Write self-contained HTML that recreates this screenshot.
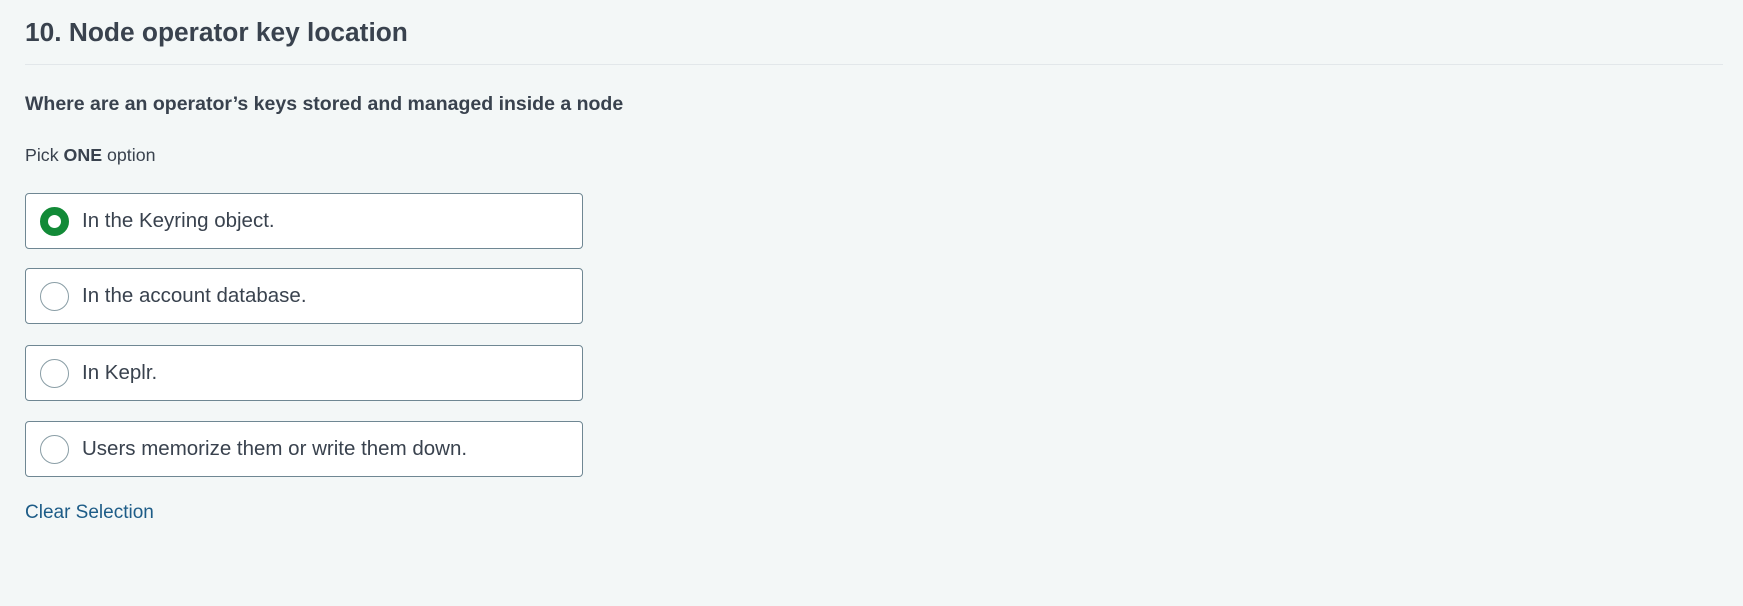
<!DOCTYPE html>
<html><head><meta charset="utf-8"><style>
html,body{margin:0;padding:0}
body{width:1743px;height:606px;background:#f3f7f7;font-family:"Liberation Sans",Arial,sans-serif;color:#39424e;position:relative;overflow:hidden}
.h{position:absolute;left:25px;top:17px;font-size:26.3px;font-weight:bold;color:#39424e;white-space:nowrap}
.sep{position:absolute;left:25px;top:64px;width:1698px;height:1px;background:#e2e7ea}
.q{position:absolute;left:25px;top:93px;font-size:19.5px;font-weight:bold;white-space:nowrap}
.p{position:absolute;left:25px;top:145px;font-size:17.8px;white-space:nowrap}
.opt{position:absolute;left:25px;width:558px;height:56px;background:#fff;border:1px solid #6f8793;border-radius:4px;box-sizing:border-box}
.r{position:absolute;left:14px;top:13px;width:29px;height:29px;border-radius:50%;border:1px solid #8a9ea6;box-sizing:border-box;background:#fff}
.r.s{border:8px solid #128a37}
.t{position:absolute;left:56px;top:15px;font-size:20.5px;white-space:nowrap}
.c{position:absolute;left:25px;top:502px;font-size:19px;color:#1d5c87;white-space:nowrap}
</style></head><body>
<div class="h">10. Node operator key location</div>
<div class="sep"></div>
<div class="q">Where are an operator’s keys stored and managed inside a node</div>
<div class="p">Pick <b>ONE</b> option</div>
<div class="opt" style="top:193px"><div class="r s"></div><div class="t">In the Keyring object.</div></div>
<div class="opt" style="top:268px"><div class="r"></div><div class="t">In the account database.</div></div>
<div class="opt" style="top:345px"><div class="r"></div><div class="t">In Keplr.</div></div>
<div class="opt" style="top:421px"><div class="r"></div><div class="t">Users memorize them or write them down.</div></div>
<div class="c">Clear Selection</div>
</body></html>
